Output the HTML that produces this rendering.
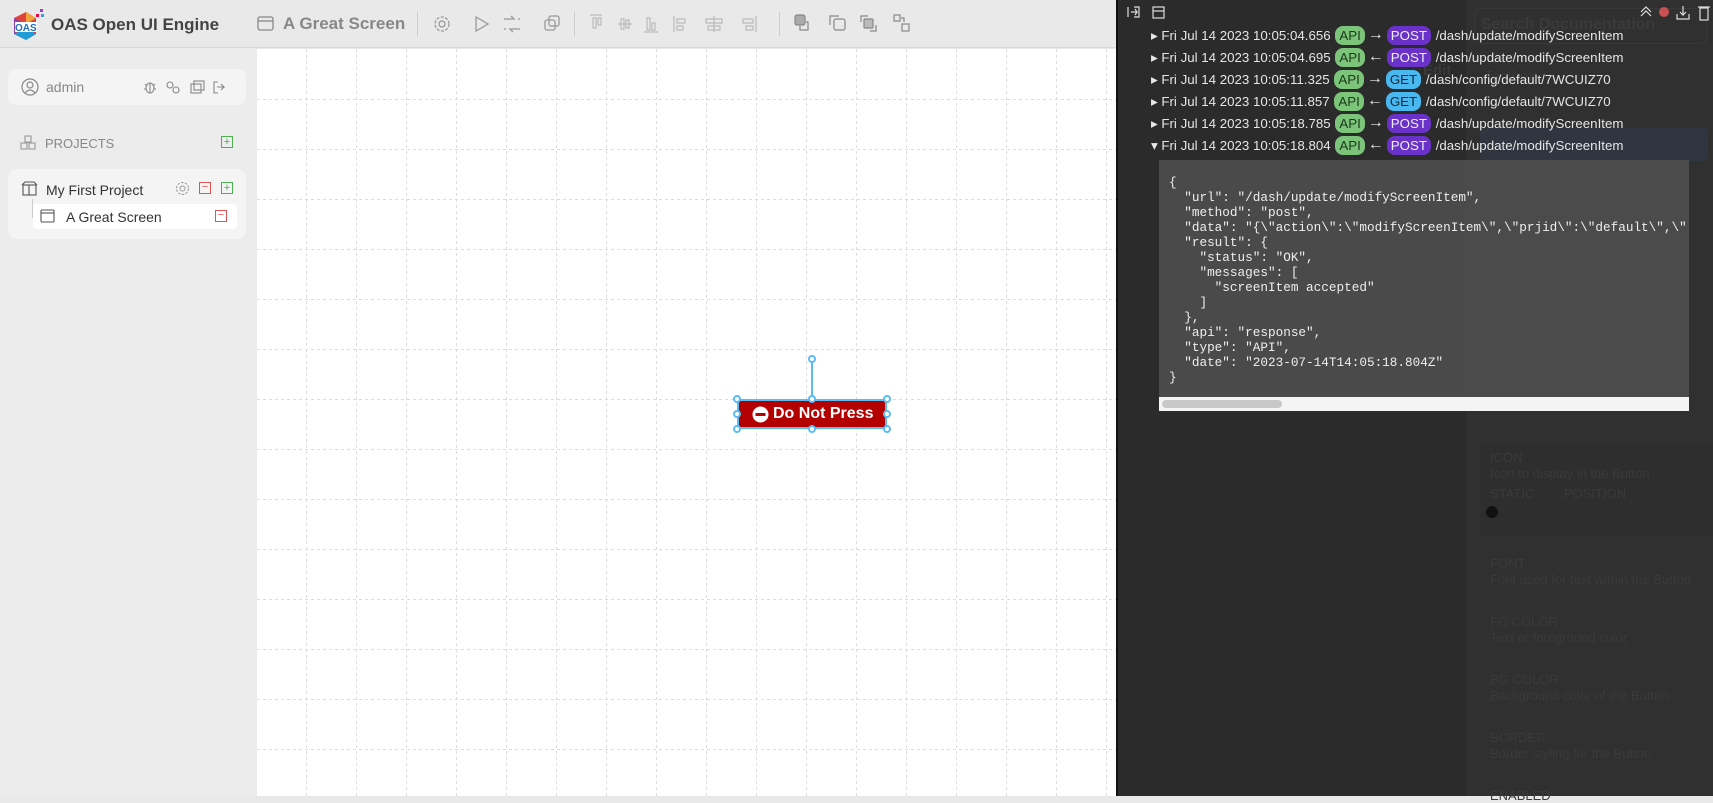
<!DOCTYPE html>
<html><head><meta charset="utf-8"><style>
*{box-sizing:border-box;margin:0;padding:0}
body{width:1713px;height:796px;overflow:hidden;font-family:"Liberation Sans",sans-serif;background:#e9e9e9;position:relative}
.abs{position:absolute}
#hdr{left:0;top:0;width:1116px;height:48px;background:#e9e9e9;border-bottom:1px solid #d6d6d6}
#side{left:0;top:49px;width:257px;height:747px;background:#ececec}
#canvas{left:257px;top:49px;width:859px;height:747px;background:#fff}
.vl{position:absolute;top:0;width:1px;height:747px;background:repeating-linear-gradient(to bottom,#dcdcdc 0 3px,transparent 3px 6px)}
.hl{position:absolute;left:0;height:1px;width:859px;background:repeating-linear-gradient(to right,#dcdcdc 0 3px,transparent 3px 6px)}
.card{background:#f4f4f4;border-radius:8px}
.gi{color:#888;font-size:13px}
#dev{left:1116px;top:0;width:597px;height:796px;background:#2b2b2b;border-left:2px solid #111}
.row{position:absolute;left:33px;color:#e6e6e6;font-size:13.3px;height:20px;line-height:20px;white-space:nowrap}
.pill{display:inline-block;border-radius:8px;padding:0 4px;height:19px;line-height:19px;margin:0 1px;vertical-align:top}
.ar{font-size:16px;display:inline-block;width:20px;text-align:center;line-height:18px;vertical-align:top}
.api{background:#7cc47a;color:#1b3a1a}
.post{background:#6a32c9;color:#eee}
.get{background:#49b8f0;color:#102a3a}
pre{font-family:"Liberation Mono",monospace;font-size:12.7px;line-height:15px;color:#eee}
.dim{color:#3a3a3a;font-size:13px}
</style></head><body>
<div id="hdr" class="abs">
 <svg class="abs" style="left:10px;top:8px" width="36" height="34" viewBox="0 0 36 34">
  <polygon points="4,10 16,4 26,10 26,26 16,32 4,26" fill="#e0433b"/>
  <polygon points="16,4 26,10 16,16" fill="#f2a33a"/>
  <polygon points="4,10 16,16 4,26" fill="#8a3fb5"/>
  <polygon points="4,26 16,32 26,26 16,20" fill="#1f9bd7"/>
  <rect x="5" y="14" width="22" height="10" fill="#fff"/>
  <text x="5" y="23" font-size="10" font-weight="bold" fill="#1f6fc4" font-family="Liberation Sans">OAS</text>
  <rect x="30" y="1" width="3" height="3" fill="#9b3fb5"/><rect x="26" y="6" width="3" height="3" fill="#e04"/><rect x="31" y="6" width="3" height="3" fill="#3b9be0"/>
 </svg>
 <div class="abs" style="left:51px;top:15px;font-size:17px;font-weight:bold;color:#444">OAS Open UI Engine</div>
 <svg class="abs" style="left:257px;top:16px" width="17" height="15"><rect x="1" y="1" width="15" height="13" rx="2" fill="none" stroke="#888" stroke-width="1.3"/><line x1="1" y1="5" x2="16" y2="5" stroke="#888" stroke-width="1.3"/></svg>
 <div class="abs" style="left:283px;top:14px;font-size:17px;font-weight:bold;color:#888">A Great Screen</div>
 <div class="abs" style="left:417px;top:12px;width:1px;height:24px;background:#ccc"></div>
 <svg class="abs" style="left:432px;top:14px" width="200" height="20" fill="none" stroke="#999" stroke-width="1.3">
  <circle cx="10" cy="10" r="3"/><circle cx="10" cy="10" r="7" stroke-dasharray="3 1.5"/>
  <path d="M44 3 L56 10 L44 17 Z"/>
  <path d="M72 5 h10 l-3 -3 M88 15 h-10 l3 3 M72 15 h2 M86 5 h2"/>
  <rect x="113" y="6" width="10" height="10" rx="2"/><rect x="117" y="2" width="10" height="10" rx="2"/>
 </svg>
 <div class="abs" style="left:574px;top:12px;width:1px;height:24px;background:#ccc"></div>
 <svg class="abs" style="left:588px;top:14px" width="180" height="22" fill="none" stroke="#bbb" stroke-width="1.2">
  <path d="M2 1 h12 M5 4 v10 h3 v-10z M10 4 v7 h3 v-7z"/>
  <path d="M30 10 h14 M33 5 v10 h3 v-10z M38 6 v8 h3 v-8z"/>
  <path d="M56 18 h14 M59 4 v12 h3 v-12z M64 9 v7 h3 v-7z"/>
  <path d="M86 2 v16 M89 5 h8 v4 h-8z M89 12 h6 v4 h-6z"/>
  <path d="M126 2 v16 M118 5 h16 v4 h-16z M120 12 h12 v4 h-12z"/>
  <path d="M168 2 v16 M155 5 h10 v4 h-10z M158 12 h7 v4 h-7z"/>
 </svg>
 <div class="abs" style="left:779px;top:12px;width:1px;height:24px;background:#ccc"></div>
 <svg class="abs" style="left:794px;top:14px" width="130" height="22" fill="none" stroke="#888" stroke-width="1.2">
  <rect x="1" y="1" width="10" height="10" rx="2" fill="#aaa"/><path d="M6 12 v4 h8 v-8 h-2"/>
  <rect x="40" y="5" width="11" height="11" rx="2"/><path d="M36 11 v-9 h9"/>
  <rect x="70" y="5" width="9" height="9" rx="1" fill="#bbb"/><path d="M67 8 v-6 h7 M82 11 v6 h-6"/>
  <rect x="100" y="1" width="6" height="6"/><rect x="108" y="10" width="7" height="7"/><path d="M107 4 h3 v4"/>
 </svg>
</div>

<div id="side" class="abs">
 <div class="card abs" style="left:8px;top:20px;width:238px;height:36px">
  <svg class="abs" style="left:13px;top:9px" width="18" height="18" fill="none" stroke="#888" stroke-width="1.2"><circle cx="9" cy="9" r="8"/><circle cx="9" cy="7" r="3"/><path d="M4 15 q5 -6 10 0"/></svg>
  <div class="abs gi" style="left:38px;top:10px;font-size:14px">admin</div>
  <svg class="abs" style="left:135px;top:10px" width="95" height="16" fill="none" stroke="#888" stroke-width="1.1">
   <ellipse cx="7" cy="9" rx="4" ry="5"/><path d="M2 5 l2 2 M12 5 l-2 2 M1 10 h2 M11 10 h2 M7 4 v10"/>
   <circle cx="27" cy="6" r="3"/><circle cx="33" cy="11" r="3"/>
   <rect x="48" y="5" width="10" height="9"/><rect x="51" y="2" width="10" height="9"/>
   <path d="M75 3 h-4 v11 h4 M74 8 h7 l-3 -3 M81 8 l-3 3"/>
  </svg>
 </div>
 <svg class="abs" style="left:20px;top:86px" width="16" height="16" fill="none" stroke="#999" stroke-width="1.1"><rect x="5" y="1" width="6" height="6"/><rect x="1" y="8" width="6" height="6"/><rect x="9" y="8" width="6" height="6"/></svg>
 <div class="abs gi" style="left:45px;top:87px">PROJECTS</div>
 <div class="abs" style="left:221px;top:87px;width:12px;height:12px;border:1px solid #4caf50;color:#4caf50;font-size:11px;line-height:10px;text-align:center">+</div>
 <div class="card abs" style="left:8px;top:120px;width:238px;height:70px">
  <svg class="abs" style="left:13px;top:12px" width="17" height="15" fill="none" stroke="#555" stroke-width="1.1"><rect x="2" y="4" width="13" height="10"/><path d="M1 4 l3 -3 h9 l3 3 M8 4 v10"/></svg>
  <div class="abs" style="left:38px;top:13px;font-size:14px;color:#333">My First Project</div>
  <svg class="abs" style="left:167px;top:12px" width="15" height="15" fill="none" stroke="#999"><circle cx="7.5" cy="7.5" r="2.5"/><circle cx="7.5" cy="7.5" r="6" stroke-dasharray="2.5 1.3"/></svg>
  <div class="abs" style="left:191px;top:13px;width:12px;height:12px;border:1px solid #d55;color:#d55;font-size:11px;line-height:9px;text-align:center">−</div>
  <div class="abs" style="left:213px;top:13px;width:12px;height:12px;border:1px solid #4caf50;color:#4caf50;font-size:11px;line-height:10px;text-align:center">+</div>
  <div class="abs" style="left:24px;top:30px;width:8px;height:19px;border-left:1px solid #ccc;border-bottom:1px solid #ccc"></div>
  <div class="abs" style="left:25px;top:35px;width:204px;height:25px;background:#fff;border-radius:4px">
   <svg class="abs" style="left:7px;top:5px" width="15" height="14" fill="none" stroke="#555" stroke-width="1.1"><rect x="1" y="1" width="13" height="12" rx="1"/><line x1="1" y1="4" x2="14" y2="4"/></svg>
   <div class="abs" style="left:33px;top:5px;font-size:14px;color:#333">A Great Screen</div>
   <div class="abs" style="left:182px;top:6px;width:12px;height:12px;border:1px solid #d55;color:#d55;font-size:11px;line-height:9px;text-align:center">−</div>
  </div>
 </div>
</div>

<div id="canvas" class="abs">
 <div class="vl" style="left:49px"></div><div class="vl" style="left:99px"></div><div class="vl" style="left:149px"></div><div class="vl" style="left:199px"></div><div class="vl" style="left:249px"></div><div class="vl" style="left:299px"></div><div class="vl" style="left:349px"></div><div class="vl" style="left:399px"></div><div class="vl" style="left:449px"></div><div class="vl" style="left:499px"></div><div class="vl" style="left:549px"></div><div class="vl" style="left:599px"></div><div class="vl" style="left:649px"></div><div class="vl" style="left:699px"></div><div class="vl" style="left:749px"></div><div class="vl" style="left:799px"></div><div class="vl" style="left:849px"></div>
 <div class="hl" style="top:50px"></div><div class="hl" style="top:100px"></div><div class="hl" style="top:150px"></div><div class="hl" style="top:200px"></div><div class="hl" style="top:250px"></div><div class="hl" style="top:300px"></div><div class="hl" style="top:350px"></div><div class="hl" style="top:400px"></div><div class="hl" style="top:450px"></div><div class="hl" style="top:500px"></div><div class="hl" style="top:550px"></div><div class="hl" style="top:600px"></div><div class="hl" style="top:650px"></div><div class="hl" style="top:700px"></div>
</div>
<div class="abs" style="left:737px;top:399px;width:150px;height:30px;background:#b30000;border:2px solid #5bbcf5"></div>
<svg class="abs" style="left:752px;top:406px" width="17" height="17"><circle cx="8.5" cy="8.5" r="8" fill="#fff"/><rect x="3.5" y="7" width="10" height="3" fill="#b30000"/></svg>
<div class="abs" style="left:773px;top:405px;color:#fff;font-weight:bold;font-size:16px">Do Not Press</div>
<div class="abs" style="left:811px;top:359px;width:2px;height:41px;background:#5bbcf5"></div>
<svg class="abs" style="left:730px;top:352px" width="165" height="84" fill="#fff" stroke="#5bbcf5" stroke-width="2">
 <circle cx="82" cy="7" r="3"/><circle cx="7" cy="47" r="3"/><circle cx="82" cy="47" r="3"/><circle cx="157" cy="47" r="3"/>
 <circle cx="7" cy="62" r="3"/><circle cx="157" cy="62" r="3"/><circle cx="7" cy="77" r="3"/><circle cx="82" cy="77" r="3"/><circle cx="157" cy="77" r="3"/>
</svg>

<div id="dev" class="abs">
 <div class="abs" style="left:348px;top:0;width:249px;height:796px;background:#303030"></div>
 <div class="abs" style="left:356px;top:8px;width:233px;height:36px;border:1px solid #383838;border-radius:6px"></div>
 <div class="abs dim" style="left:363px;top:16px;font-size:16px;font-weight:bold">Search Documentation</div>
 <div class="abs dim" style="left:366px;top:68px;font-size:15px">Toolbox</div>
 <div class="abs dim" style="left:305px;top:62px;font-size:15px;font-weight:bold">Edit</div>
 <div class="abs" style="left:362px;top:128px;width:228px;height:33px;background:#2f3640;border-radius:4px"></div>
 <div class="abs dim" style="left:390px;top:196px;font-weight:bold;font-size:14px">Button</div>
 <div class="abs dim" style="left:366px;top:286px">LOCATION &amp; SIZE</div>
 <div class="abs" style="left:362px;top:442px;width:240px;height:95px;background:#2e2e2e;border-radius:6px"></div>
 <div class="abs dim" style="left:372px;top:450px">ICON</div><div class="abs dim" style="left:372px;top:466px">Icon to display in the Button</div>
 <div class="abs dim" style="left:372px;top:486px">STATIC</div><div class="abs dim" style="left:446px;top:486px">POSITION</div>
 <svg class="abs" style="left:366px;top:504px" width="16" height="16"><circle cx="8" cy="8" r="6" fill="#111"/></svg>
 <div class="abs dim" style="left:372px;top:556px">FONT</div><div class="abs dim" style="left:372px;top:572px">Font used for text within the Button</div>
 <div class="abs dim" style="left:372px;top:614px">FG COLOR</div><div class="abs dim" style="left:372px;top:630px">Text or foreground color</div>
 <div class="abs dim" style="left:372px;top:672px">BG COLOR</div><div class="abs dim" style="left:372px;top:688px">Background color of the Button</div>
 <div class="abs dim" style="left:372px;top:730px">BORDER</div><div class="abs dim" style="left:372px;top:746px">Border styling for the Button</div>
 <div class="abs dim" style="left:372px;top:788px">ENABLED</div>

 <svg class="abs" style="left:9px;top:5px" width="40" height="16" fill="none" stroke="#ddd" stroke-width="1.2"><path d="M1 2 v10 M4 7 h6 l-2 -3 M10 7 l-2 3 M7 2 h5 v10 h-5"/><rect x="26" y="2" width="11" height="11"/><line x1="26" y1="6" x2="37" y2="6"/></svg>
 <svg class="abs" style="left:521px;top:4px" width="76" height="18" fill="none" stroke="#ddd" stroke-width="1.2"><path d="M2 8 l5 -5 l5 5 M2 12 l5 -5 l5 5"/><circle cx="25" cy="8" r="5" fill="#c95050" stroke="none"/><path d="M44 2 v9 l-3 -3 M44 11 l3 -3 M38 10 v5 h12 v-5"/><rect x="61" y="4" width="8" height="12"/><path d="M59 3 h12"/></svg>

 <div class="row" style="top:26px">▸ Fri Jul 14 2023 10:05:04.656 <span class="pill api">API</span><span class="ar">→</span><span class="pill post">POST</span> /dash/update/modifyScreenItem</div>
 <div class="row" style="top:48px">▸ Fri Jul 14 2023 10:05:04.695 <span class="pill api">API</span><span class="ar">←</span><span class="pill post">POST</span> /dash/update/modifyScreenItem</div>
 <div class="row" style="top:70px">▸ Fri Jul 14 2023 10:05:11.325 <span class="pill api">API</span><span class="ar">→</span><span class="pill get">GET</span> /dash/config/default/7WCUIZ70</div>
 <div class="row" style="top:92px">▸ Fri Jul 14 2023 10:05:11.857 <span class="pill api">API</span><span class="ar">←</span><span class="pill get">GET</span> /dash/config/default/7WCUIZ70</div>
 <div class="row" style="top:114px">▸ Fri Jul 14 2023 10:05:18.785 <span class="pill api">API</span><span class="ar">→</span><span class="pill post">POST</span> /dash/update/modifyScreenItem</div>
 <div class="row" style="top:136px">▾ Fri Jul 14 2023 10:05:18.804 <span class="pill api">API</span><span class="ar">←</span><span class="pill post">POST</span> /dash/update/modifyScreenItem</div>

 <div class="abs" style="left:41px;top:160px;width:530px;height:251px;background:rgba(80,80,80,0.85);overflow:hidden">
<pre style="position:absolute;left:10px;top:15px">{
  "url": "/dash/update/modifyScreenItem",
  "method": "post",
  "data": "{\"action\":\"modifyScreenItem\",\"prjid\":\"default\",\"
  "result": {
    "status": "OK",
    "messages": [
      "screenItem accepted"
    ]
  },
  "api": "response",
  "type": "API",
  "date": "2023-07-14T14:05:18.804Z"
}</pre>
  <div class="abs" style="left:0;top:237px;width:530px;height:14px;background:#f4f4f4"><div class="abs" style="left:3px;top:3px;width:120px;height:8px;border-radius:4px;background:#c8c8c8"></div></div>
 </div>
</div>
</body></html>
